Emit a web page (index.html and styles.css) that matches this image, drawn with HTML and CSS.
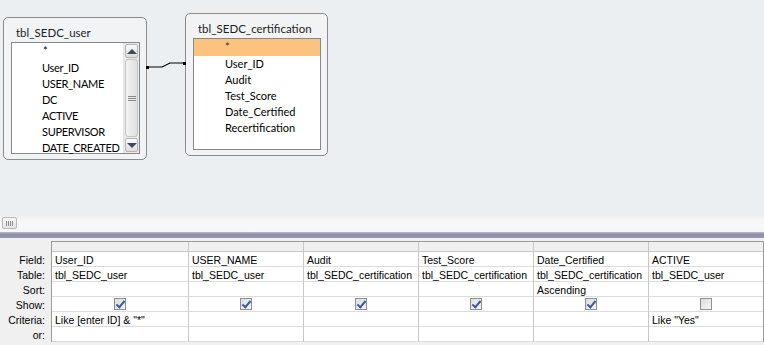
FILE: index.html
```html
<!DOCTYPE html>
<html lang="en">
<head>
    <meta charset="UTF-8">
    <title>Query Design</title>
    <link rel="stylesheet" href="styles.css">
</head>
<body>
    <div class="design-pane">
        <div class="table-win user-win">
            <div class="win-title">tbl_SEDC_user</div>
            <div class="field-list">
                <ul class="fields">
                    <li class="star">*</li>
                    <li>User_ID</li>
                    <li>USER_NAME</li>
                    <li>DC</li>
                    <li>ACTIVE</li>
                    <li>SUPERVISOR</li>
                    <li>DATE_CREATED</li>
                </ul>
                <div class="vscroll">
                    <div class="vbtn"><span class="arrow-up"></span></div>
                    <div class="vthumb"><span class="grip"></span></div>
                    <div class="vbtn"><span class="arrow-down"></span></div>
                </div>
            </div>
        </div>

        <div class="table-win cert-win">
            <div class="win-title">tbl_SEDC_certification</div>
            <div class="field-list">
                <ul class="fields">
                    <li class="star selected">*</li>
                    <li>User_ID</li>
                    <li>Audit</li>
                    <li>Test_Score</li>
                    <li>Date_Certified</li>
                    <li>Recertification</li>
                </ul>
            </div>
        </div>

        <svg class="join" width="764" height="215" viewBox="0 0 764 215">
            <polyline points="147,67 162,67 170,63 185,63" fill="none" stroke="#000" stroke-width="1.2"/>
            <rect x="146" y="66" width="3" height="3" fill="#000"/>
            <rect x="183" y="62" width="3" height="3" fill="#000"/>
        </svg>
    </div>

    <div class="hscroll">
        <div class="hthumb"><span class="hgrip"></span></div>
    </div>
    <div class="splitter"></div>

    <div class="grid-pane">
        <div class="labels">
            <div class="lbl head"></div>
            <div class="lbl">Field:</div>
            <div class="lbl">Table:</div>
            <div class="lbl">Sort:</div>
            <div class="lbl">Show:</div>
            <div class="lbl">Criteria:</div>
            <div class="lbl">or:</div>
        </div>
        <div class="qbe">
            <div class="col first">
                <div class="cell head"></div>
                <div class="cell">User_ID</div>
                <div class="cell">tbl_SEDC_user</div>
                <div class="cell"></div>
                <div class="cell chk"><span class="box on"></span></div>
                <div class="cell">Like [enter ID] &amp; "*"<span class="ibeam"></span></div>
                <div class="cell"></div>
            </div>
            <div class="col">
                <div class="cell head"></div>
                <div class="cell">USER_NAME</div>
                <div class="cell">tbl_SEDC_user</div>
                <div class="cell"></div>
                <div class="cell chk"><span class="box on"></span></div>
                <div class="cell"></div>
                <div class="cell"></div>
            </div>
            <div class="col">
                <div class="cell head"></div>
                <div class="cell">Audit</div>
                <div class="cell">tbl_SEDC_certification</div>
                <div class="cell"></div>
                <div class="cell chk"><span class="box on"></span></div>
                <div class="cell"></div>
                <div class="cell"></div>
            </div>
            <div class="col">
                <div class="cell head"></div>
                <div class="cell">Test_Score</div>
                <div class="cell">tbl_SEDC_certification</div>
                <div class="cell"></div>
                <div class="cell chk"><span class="box on"></span></div>
                <div class="cell"></div>
                <div class="cell"></div>
            </div>
            <div class="col">
                <div class="cell head"></div>
                <div class="cell">Date_Certified</div>
                <div class="cell">tbl_SEDC_certification</div>
                <div class="cell">Ascending</div>
                <div class="cell chk"><span class="box on"></span></div>
                <div class="cell"></div>
                <div class="cell"></div>
            </div>
            <div class="col">
                <div class="cell head"></div>
                <div class="cell">ACTIVE</div>
                <div class="cell">tbl_SEDC_user</div>
                <div class="cell"></div>
                <div class="cell chk"><span class="box"></span></div>
                <div class="cell">Like "Yes"</div>
                <div class="cell"></div>
            </div>
        </div>
    </div>
</body>
</html>
```

FILE: styles.css
```css
* {
    margin: 0;
    padding: 0;
    box-sizing: border-box;
}

body {
    width: 764px;
    height: 345px;
    overflow: hidden;
    background: #f0f0f0;
    font-family: "Liberation Sans", Arial, sans-serif;
}

/* upper pane: table windows on a free canvas */
.design-pane {
    position: relative;
    height: 215px;
    background: #eceff2;
}

.table-win {
    position: absolute;
    background: #f2f3f5;
    border: 1px solid #8c8c8c;
    border-radius: 5px;
    padding: 0 6px 6px 7px;
    font-family: Lato, "Noto Sans", sans-serif;
    font-size: 11.5px;
    color: #000;
}

.user-win {
    left: 3px;
    top: 17px;
    width: 144px;
    height: 143px;
}

.cert-win {
    left: 185px;
    top: 13px;
    width: 143px;
    height: 143px;
}

.win-title {
    height: 24px;
    line-height: 30px;
    padding-left: 5px;
    color: #1e1e1e;
}

.field-list {
    display: flex;
    height: 112px;
    background: #fff;
    border: 1px solid #828790;
}

.fields {
    list-style: none;
    flex: 1;
    min-width: 0;
    padding-left: 30px;
    font-size: 11px;
}

.fields li {
    height: 16px;
    line-height: 16px;
    white-space: nowrap;
    overflow: hidden;
}

.user-win .fields {
    letter-spacing: -0.3px;
}

.user-win .fields li:first-child {
    height: 17px;
}

.user-win .fields .star {
    padding-left: 1px;
}

.cert-win .fields {
    padding-left: 0;
}

.cert-win .fields li {
    padding-left: 31px;
}

.fields .selected {
    background: #fbc37d;
    height: 17px;
    color: #333;
}

.vscroll {
    width: 16px;
    flex-shrink: 0;
    display: flex;
    flex-direction: column;
    background: #eaeaea;
    border-left: 1px solid #e2e2e2;
    padding: 1px;
    gap: 1px;
}

.vbtn {
    height: 14px;
    background: linear-gradient(#fafafa, #dcdcdc);
    border: 1px solid #b5b5b5;
    border-radius: 2px;
    display: flex;
    align-items: center;
    justify-content: center;
}

.arrow-up {
    width: 0;
    height: 0;
    border-left: 5px solid transparent;
    border-right: 5px solid transparent;
    border-bottom: 5px solid #3d4a5c;
}

.arrow-down {
    width: 0;
    height: 0;
    border-left: 5px solid transparent;
    border-right: 5px solid transparent;
    border-top: 5px solid #3d4a5c;
}

.vthumb {
    flex: 1;
    background: linear-gradient(to right, #f2f2f2, #e0e0e0);
    border: 1px solid #c4c4c4;
    border-radius: 3px;
    display: flex;
    align-items: center;
    justify-content: center;
}

.grip {
    width: 8px;
    height: 5px;
    border-top: 1px solid #8a8a8a;
    border-bottom: 1px solid #8a8a8a;
    position: relative;
}

.grip::after {
    content: "";
    position: absolute;
    left: 0;
    right: 0;
    top: 1px;
    border-top: 1px solid #8a8a8a;
}

.join {
    position: absolute;
    left: 0;
    top: 0;
}

/* horizontal scrollbar under the design pane */
.hscroll {
    height: 17px;
    background: linear-gradient(#eceef1, #f7f8f9 40%, #f7f7f8);
    padding: 2px 0 0 2px;
}

.hthumb {
    width: 15px;
    height: 12px;
    border: 1px solid #b8b8b8;
    border-radius: 2px;
    background: linear-gradient(#f8f8f8, #e6e6e6);
    display: flex;
    align-items: center;
    justify-content: center;
}

.hgrip {
    width: 7px;
    height: 5px;
    background: repeating-linear-gradient(to right, #8a8a8a 0 1px, transparent 1px 2px);
}

.splitter {
    height: 6px;
    background: linear-gradient(#b9bacb, #8a8ca6 45%, #9899b1);
}

/* lower pane: query by example grid */
.grid-pane {
    display: flex;
    padding-top: 3px;
    font-size: 10.5px;
    color: #000;
}

.labels {
    width: 51px;
}

.lbl {
    height: 15px;
    line-height: 16px;
    text-align: right;
    padding-right: 6px;
}

.lbl.head {
    height: 11px;
}

.qbe {
    display: flex;
    border-left: 1px solid #9a9a9a;
    border-top: 1px solid #9a9a9a;
}

.col {
    width: 115px;
    border-right: 1px solid #c8c8c8;
    background: #fff;
}

.col.first {
    width: 137px;
}

.col:last-child {
    border-right-color: #9a9a9a;
}

.cell {
    height: 15px;
    line-height: 16px;
    padding-left: 3px;
    border-bottom: 1px solid #dcdcdc;
    white-space: nowrap;
    overflow: hidden;
    position: relative;
}

.cell.head {
    height: 10px;
    background: #f0f0f0;
    border-bottom: 1px solid #c8c8c8;
}

.cell.chk {
    display: flex;
    align-items: center;
    justify-content: center;
    padding-left: 0;
}

.box {
    width: 12px;
    height: 12px;
    border: 1px solid #8e8f8f;
    background: linear-gradient(135deg, #dcdcdc, #f6f6f6);
    position: relative;
}

.box.on::after {
    content: "";
    position: absolute;
    left: 3px;
    top: 0;
    width: 3px;
    height: 7px;
    border-right: 2px solid #3b5aa0;
    border-bottom: 2px solid #3b5aa0;
    transform: rotate(40deg);
}

.ibeam {
    position: absolute;
    left: 162px;
    top: 2px;
}
```
